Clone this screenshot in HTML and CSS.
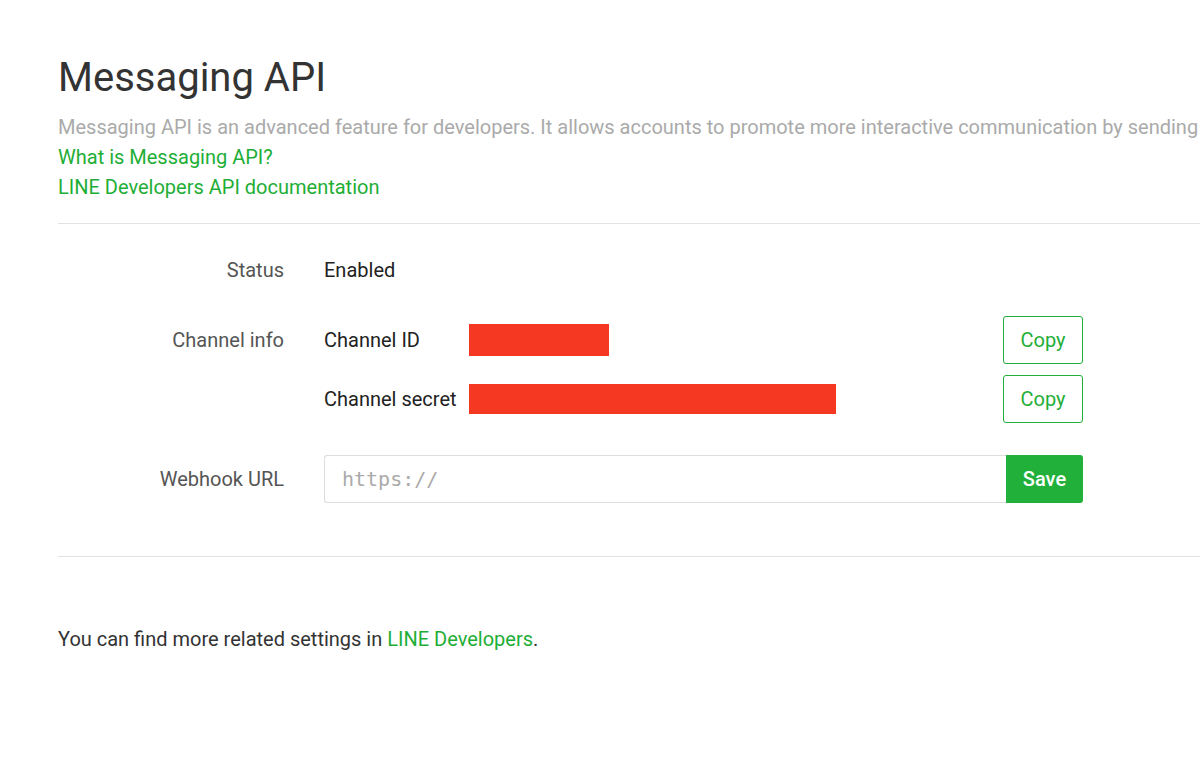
FILE: index.html
```html
<!DOCTYPE html>
<html lang="en">
<head>
  <meta charset="UTF-8" />
  <meta name="viewport" content="width=device-width, initial-scale=1.0"/>
  <title>Messaging API</title>
  <link rel="stylesheet" href="styles.css">
</head>
<body>
  <main class="page">
    <h1 class="title">Messaging API</h1>
    <p class="desc">Messaging API is an advanced feature for developers. It allows accounts to promote more interactive communication by sending</p>
    <p class="link-line"><a href="#">What is Messaging API?</a></p>
    <p class="link-line"><a href="#">LINE Developers API documentation</a></p>

    <section class="settings">
      <div class="row">
        <div class="label">Status</div>
        <div class="value">Enabled</div>
      </div>

      <div class="row row-info">
        <div class="label">Channel info</div>
        <div class="value">
          <div class="info-item">
            <span class="info-key">Channel ID</span>
            <span class="redact redact-short"></span>
            <button class="btn-copy">Copy</button>
          </div>
          <div class="info-item">
            <span class="info-key">Channel secret</span>
            <span class="redact redact-long"></span>
            <button class="btn-copy">Copy</button>
          </div>
        </div>
      </div>

      <div class="row row-webhook">
        <div class="label">Webhook URL</div>
        <div class="value">
          <div class="input-group">
            <input type="text" class="webhook-input" placeholder="https://" />
            <button class="btn-save">Save</button>
          </div>
        </div>
      </div>
    </section>

    <p class="more">You can find more related settings in <a href="#">LINE Developers</a>.</p>
  </main>
</body>
</html>
```

FILE: styles.css
```css
body {
  font-family: Roboto, "Liberation Sans", sans-serif;
  margin: 0;
  background: #fff;
  color: #333;
  overflow: hidden;
}
a {
  color: #1eae36;
  text-decoration: none;
}
.page {
  padding: 52px 0 0 58px;
}
.title {
  font-size: 40px;
  font-weight: 400;
  color: #333;
  margin: 0 0 8px;
  line-height: 52px;
}
.desc {
  margin: 0;
  font-size: 20px;
  line-height: 30px;
  color: #aaa;
  white-space: nowrap;
}
.link-line {
  margin: 0;
  font-size: 20px;
  line-height: 30px;
}
.settings {
  margin-top: 21px;
  border-top: 1px solid #e3e3e3;
  border-bottom: 1px solid #e3e3e3;
  padding: 22px 0 53px;
}
.row {
  display: flex;
  align-items: flex-start;
  font-size: 20px;
}
.label {
  width: 226px;
  flex-shrink: 0;
  text-align: right;
  color: #555;
  line-height: 48px;
  margin-right: 40px;
}
.value {
  width: 759px;
  line-height: 48px;
  color: #222;
}
.row-info {
  margin-top: 22px;
}
.row-webhook {
  margin-top: 32px;
}
.info-item {
  display: flex;
  align-items: center;
  height: 48px;
}
.info-item + .info-item {
  margin-top: 11px;
}
.info-key {
  width: 145px;
  flex-shrink: 0;
  color: #222;
}
.redact {
  display: inline-block;
  background: #f53822;
  height: 32px;
}
.redact-short {
  width: 140px;
}
.redact-long {
  width: 367px;
  height: 30px;
}
.btn-copy {
  margin-left: auto;
  width: 80px;
  height: 48px;
  background: #fff;
  border: 1px solid #1fae37;
  border-radius: 3px;
  color: #1fae37;
  font-family: Roboto, "Liberation Sans", sans-serif;
  font-size: 20px;
  cursor: pointer;
}
.input-group {
  display: flex;
  height: 48px;
}
.webhook-input {
  flex: 1;
  box-sizing: border-box;
  height: 48px;
  border: 1px solid #ddd;
  border-right: none;
  border-radius: 3px 0 0 3px;
  padding: 0 17px;
  font-family: "DejaVu Sans Mono", "Liberation Mono", monospace;
  font-size: 20px;
  color: #333;
  outline: none;
}
.webhook-input::placeholder {
  color: #aaa;
}
.btn-save {
  width: 77px;
  height: 48px;
  background: #21b13a;
  border: none;
  border-radius: 0 3px 3px 0;
  color: #fff;
  font-family: Roboto, "Liberation Sans", sans-serif;
  font-size: 20px;
  font-weight: 500;
  cursor: pointer;
}
.more {
  margin: 67px 0 0;
  font-size: 20px;
  line-height: 30px;
  color: #333;
}
```
